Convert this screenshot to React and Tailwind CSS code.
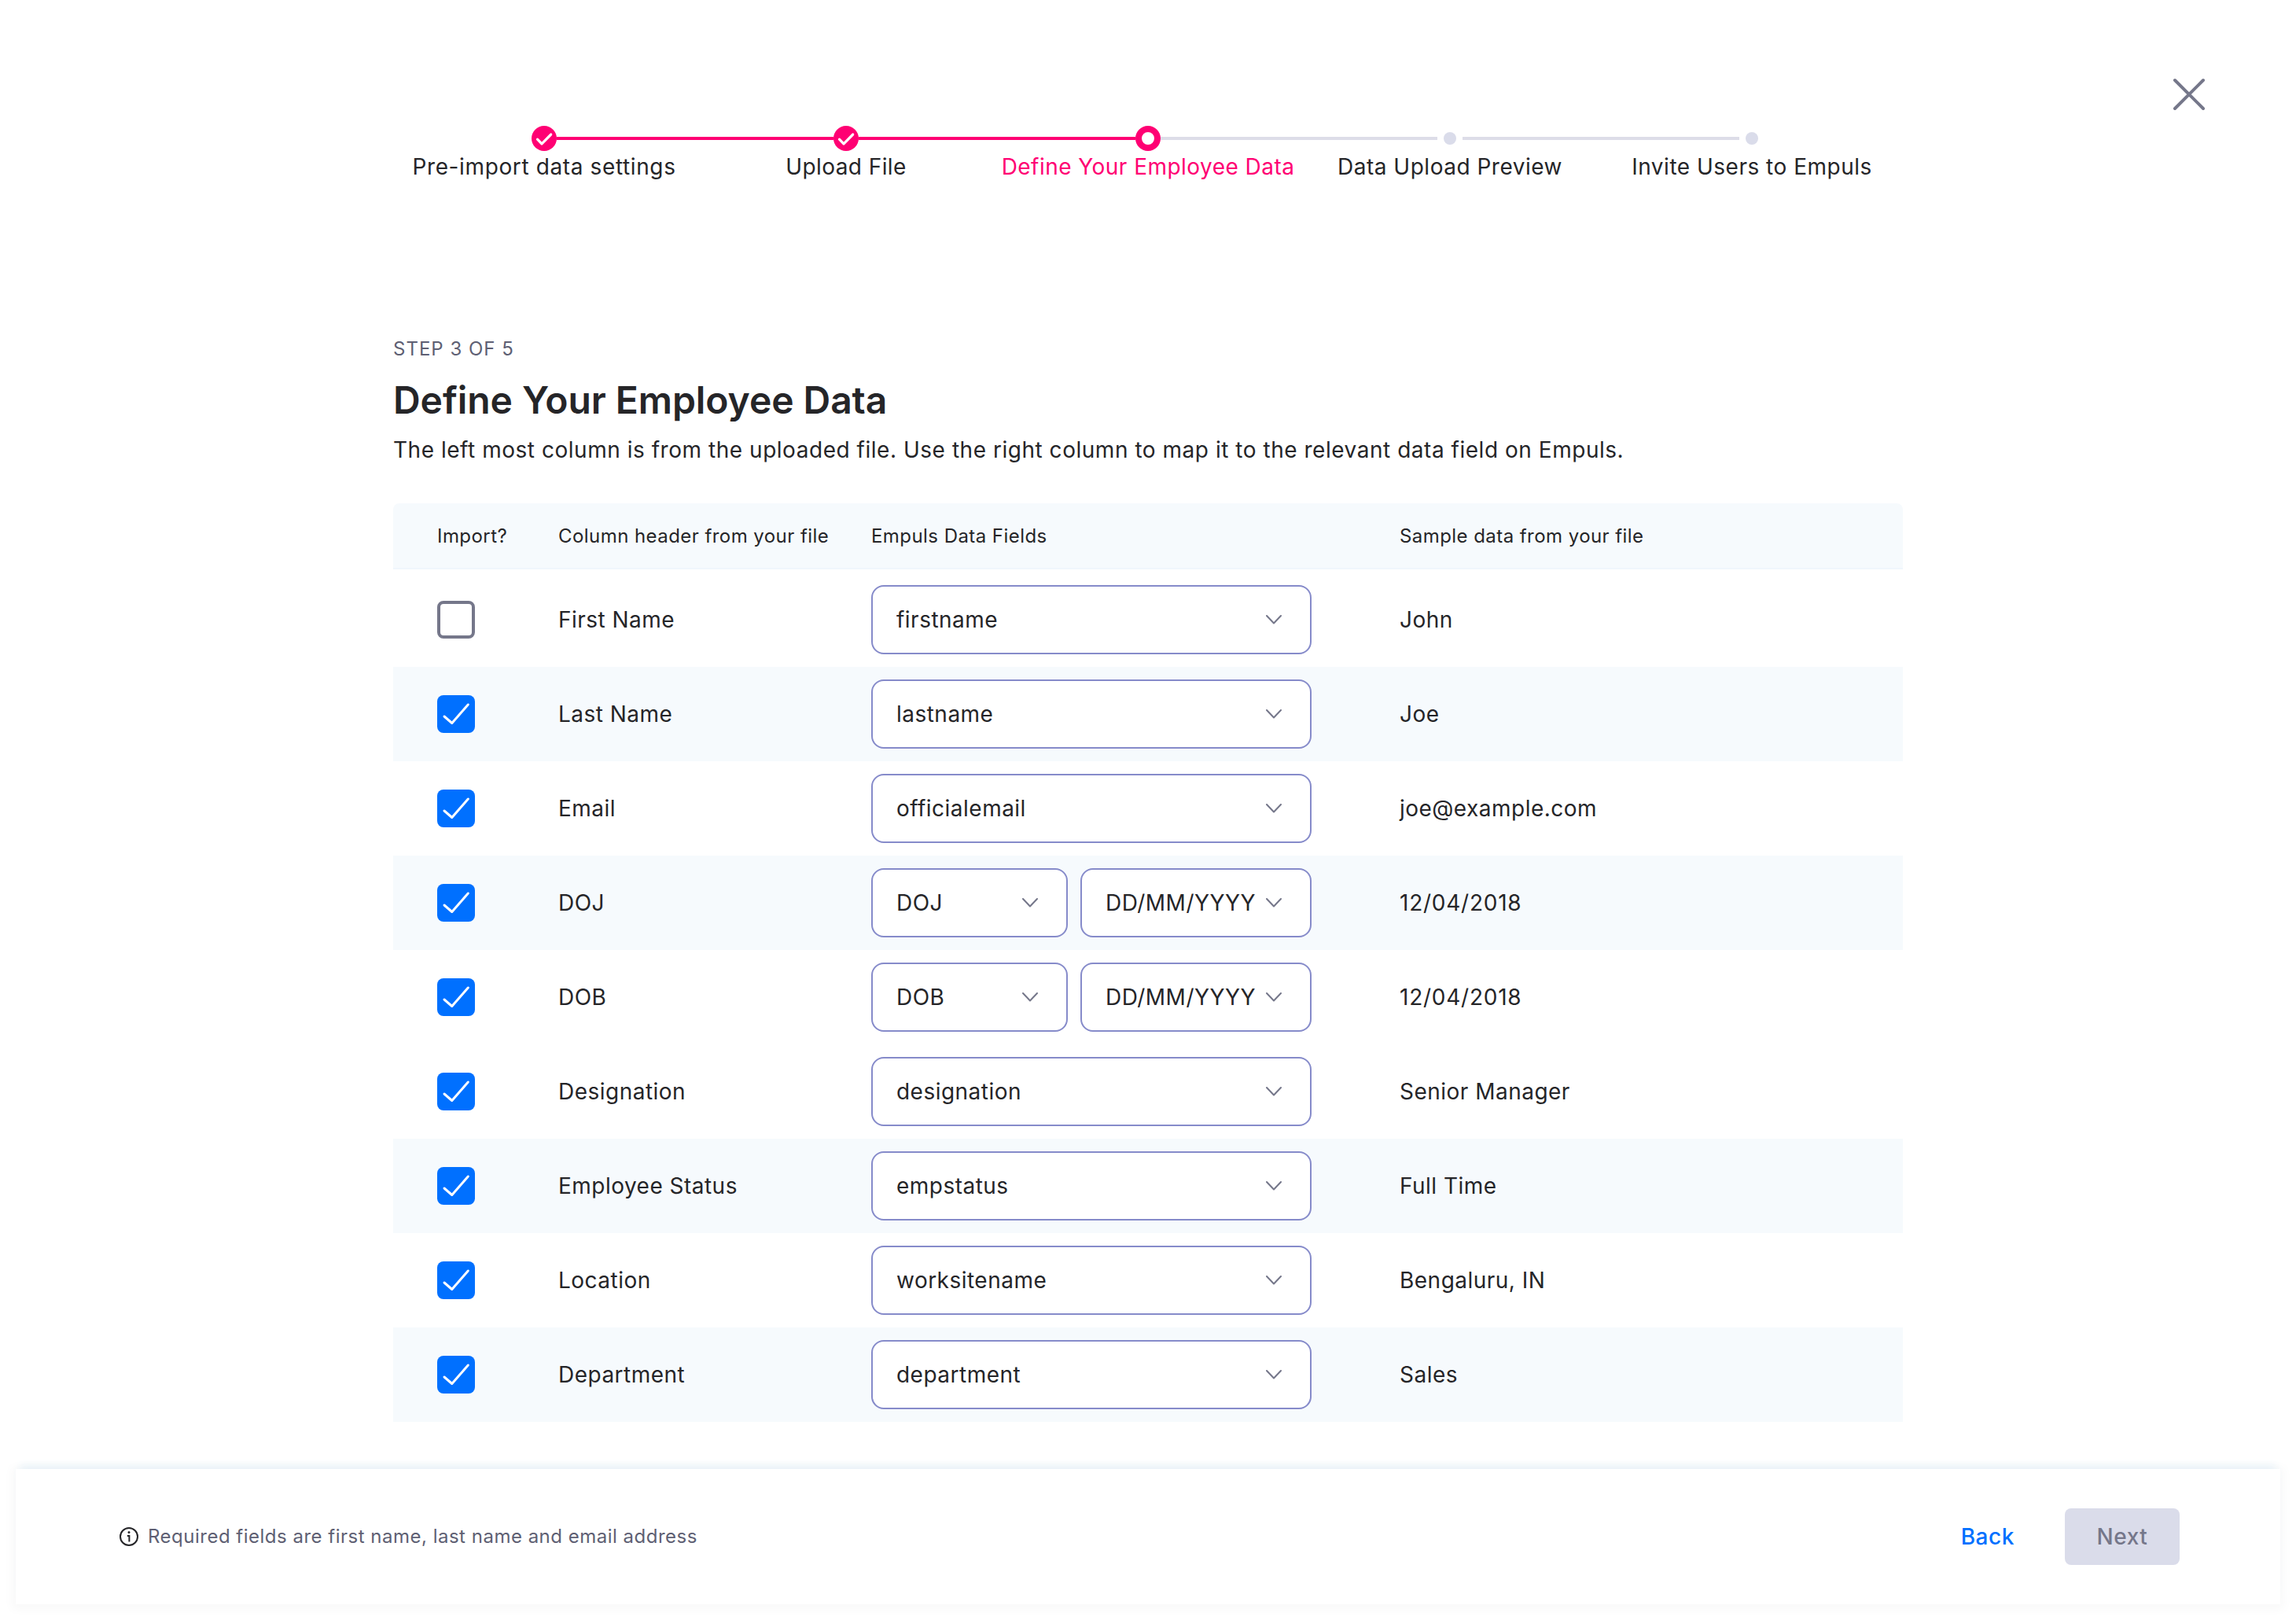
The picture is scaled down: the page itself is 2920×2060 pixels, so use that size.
import React from "react";

const STEPS = [
  { label: "Pre-import data settings", state: "done", tracking: "tracking-[0.62px]" },
  { label: "Upload File", state: "done", tracking: "tracking-[0.42px]" },
  { label: "Define Your Employee Data", state: "current", tracking: "tracking-[0.46px]" },
  { label: "Data Upload Preview", state: "todo", tracking: "tracking-[0.5px]" },
  { label: "Invite Users to Empuls", state: "todo", tracking: "tracking-[0.5px]" },
];

const ROWS = [
  { header: "First Name", fields: ["firstname"], sample: "John", checked: false, shaded: false },
  { header: "Last Name", fields: ["lastname"], sample: "Joe", checked: true, shaded: true },
  { header: "Email", fields: ["officialemail"], sample: "joe@example.com", checked: true, shaded: false },
  { header: "DOJ", fields: ["DOJ", "DD/MM/YYYY"], sample: "12/04/2018", date: true, checked: true, shaded: true },
  { header: "DOB", fields: ["DOB", "DD/MM/YYYY"], sample: "12/04/2018", date: true, checked: true, shaded: false },
  { header: "Designation", fields: ["designation"], sample: "Senior Manager", checked: true, shaded: false },
  { header: "Employee Status", fields: ["empstatus"], sample: "Full Time", checked: true, shaded: true },
  { header: "Location", fields: ["worksitename"], sample: "Bengaluru, IN", checked: true, shaded: false },
  { header: "Department", fields: ["department"], sample: "Sales", checked: true, shaded: true },
];

const GRID = "grid grid-cols-[154px_398px_672px_1fr] items-center pl-14";

function StepMarker({ state }) {
  if (state === "done") {
    return (
      <svg className="size-8 shrink-0" viewBox="0 0 32 32" fill="none">
        <circle cx="16" cy="16" r="16" fill="#ff0073" />
        <path d="M7.5 17.2L13 22.8L24.7 11" stroke="#fff" strokeWidth="3.2" strokeLinecap="round" strokeLinejoin="round" />
      </svg>
    );
  }
  if (state === "current") {
    return <span className="size-8 shrink-0 rounded-full border-8 border-[#ff0073] bg-white" />;
  }
  return <span className="mx-2 size-4 shrink-0 rounded-full bg-[#dadcea]" />;
}

function Stepper() {
  const line = (i) => {
    if (i < 0 || i >= STEPS.length - 1) return "";
    return STEPS[i].state === "done" ? "bg-[#ff0073]" : "bg-[#dddde8]";
  };
  return (
    <ol className="flex">
      {STEPS.map((s, i) => (
        <li key={s.label} className="flex w-[384px] flex-col items-center">
          <div className="flex h-8 w-full items-center">
            <span className={`h-1 flex-1 ${line(i - 1)}`} />
            <StepMarker state={s.state} />
            <span className={`h-1 flex-1 ${line(i)}`} />
          </div>
          <span
            className={`text-[28px] leading-10 whitespace-nowrap ${s.tracking} ${
              s.state === "current" ? "text-[#ff0073]" : "text-[#252528]"
            }`}
          >
            {s.label}
          </span>
        </li>
      ))}
    </ol>
  );
}

function Checkbox({ checked }) {
  if (!checked) return <span className="size-12 rounded-lg border-4 border-[#75778a] bg-white" />;
  return (
    <span className="size-12 rounded-lg bg-[#0070ff]">
      <svg className="size-12" viewBox="0 0 48 48" fill="none">
        <path d="M9 27L18.8 35.5L39.3 12" stroke="#fff" strokeWidth="3" strokeLinecap="round" strokeLinejoin="round" />
      </svg>
    </span>
  );
}

function Select({ value, width }) {
  return (
    <button
      className={`flex h-[88px] items-center justify-between rounded-2xl border-2 border-[#868bca] bg-white pr-9 pl-[30px] ${width}`}
    >
      <span>{value}</span>
      <svg className="h-3 w-[20px] shrink-0" viewBox="0 0 20 12" fill="none">
        <path d="M1 1L10 10.5L19 1" stroke="#75778a" strokeWidth="2" strokeLinecap="round" strokeLinejoin="round" />
      </svg>
    </button>
  );
}

export default function App() {
  return (
    <div className="flex h-[2060px] w-[2920px] flex-col bg-white font-['Inter',sans-serif] text-[28px] leading-10 tracking-[0.48px] text-[#252528]">
      <header className="flex h-[420px] items-start justify-between pt-[98px] pr-[114px] pl-[500px]">
        <div className="pt-[62px]">
          <Stepper />
        </div>
        <button aria-label="Close">
          <svg className="size-11" viewBox="0 0 44 44" fill="none">
            <path d="M4 4L40 40M40 4L4 40" stroke="#75778a" strokeWidth="4" strokeLinecap="round" />
          </svg>
        </button>
      </header>

      <main className="ml-[500px] w-[1920px]">
        <p className="mt-2 text-2xl leading-8 tracking-[1px] text-[#5e5f73]">STEP 3 OF 5</p>
        <h1 className="mt-[17px] text-5xl leading-[64px] font-semibold tracking-[-0.07px]">Define Your Employee Data</h1>
        <p className="mt-[11px] tracking-[0.53px]">
          The left most column is from the uploaded file. Use the right column to map it to the relevant data field on Empuls.
        </p>

        <div
          className={`mt-12 h-[84px] rounded-t-lg border-b-2 border-[#f0f6fc] bg-[#f6fafd] pt-0.5 text-2xl tracking-[0.44px] ${GRID}`}
        >
          <span>Import?</span>
          <span>Column header from your file</span>
          <span>Empuls Data Fields</span>
          <span>Sample data from your file</span>
        </div>
        <div className="mt-1">
          {ROWS.map((r) => (
            <div key={r.header} className={`h-[120px] ${GRID} ${r.shaded ? "bg-[#f6fafd]" : "bg-white"}`}>
              <Checkbox checked={r.checked} />
              <span>{r.header}</span>
              <div className="flex gap-4">
                {r.fields.map((f, i) => (
                  <Select
                    key={f}
                    value={f}
                    width={r.fields.length === 1 ? "w-[560px]" : i === 0 ? "w-[250px]" : "w-[294px]"}
                  />
                ))}
              </div>
              <span className={r.date ? "tracking-[0.75px]" : ""}>{r.sample}</span>
            </div>
          ))}
        </div>
      </main>

      <footer className="mx-5 mt-[60px] flex h-[172px] items-center justify-between bg-white pr-32 pl-[132px] shadow-[0_-10px_10px_-6px_#e6f1f8,0_2px_12px_5px_#f9f9f9]">
        <div className="flex items-center gap-3 text-2xl tracking-[0.5px] text-[#5e5f73]">
          <svg className="size-6" viewBox="0 0 24 24" fill="none" stroke="#252528">
            <circle cx="12" cy="12" r="11" strokeWidth="2" />
            <path d="M9.8 11H12.4V18.4" strokeWidth="2" />
            <circle cx="12" cy="6.4" r="1.5" fill="#252528" stroke="none" />
          </svg>
          <span>Required fields are first name, last name and email address</span>
        </div>
        <div className="flex items-center gap-16 font-medium tracking-[0.56px]">
          <button className="text-[#0070ff]">Back</button>
          <button className="h-[72px] w-[146px] rounded-lg bg-[#dadcea] text-[#75778a]">Next</button>
        </div>
      </footer>
    </div>
  );
}
